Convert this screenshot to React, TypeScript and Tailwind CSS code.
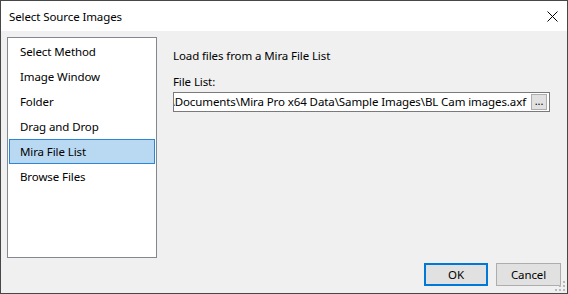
import React from 'react';

const items = ['Select Method', 'Image Window', 'Folder', 'Drag and Drop', 'Mira File List', 'Browse Files'];

function SizeGrip() {
  const dots = [
    [8, 0],
    [4, 4],
    [8, 4],
    [0, 8],
    [4, 8],
    [8, 8],
  ];
  return (
    <svg width="11" height="11" viewBox="0 0 11 11" className="absolute right-[1px] bottom-[1px]">
      {dots.map(([x, y]) => (
        <rect key={`${x}-${y}`} x={x} y={y} width="2" height="2" fill="#b8b8b8" />
      ))}
    </svg>
  );
}

export default function App() {
  return (
    <div
      className="relative w-[568px] h-[294px] border border-[#474747] bg-[#f0f0f0] text-[11.5px] tracking-[-0.1px] text-black flex flex-col"
      style={{ fontFamily: '"Noto Sans", "Open Sans", sans-serif' }}
    >
      <div className="h-[30px] bg-white flex items-center justify-between pl-[8px] pr-[9px] pt-[1px]">
        <span className="leading-[16px]">Select Source Images</span>
        <svg width="11" height="11" viewBox="0 0 11 11">
          <path d="M0.5 0.5 L10.5 10.5 M10.5 0.5 L0.5 10.5" stroke="#000" strokeWidth="1" />
        </svg>
      </div>

      <div className="flex-1 flex flex-col pt-[6px] pl-[6px] pr-[6px]">
        <div className="flex">
          <div className="w-[150px] h-[221px] border border-[#828790] bg-white pt-[1px] px-[1px]">
            {items.map((item) =>
              item === 'Mira File List' ? (
                <div
                  key={item}
                  className="h-[25px] flex items-center pl-[10px] pt-[1px] bg-[#b9d9f3] border border-[#2c86d8]"
                >
                  {item}
                </div>
              ) : (
                <div key={item} className="h-[25px] flex items-center pl-[11px] pt-[1px]">
                  {item}
                </div>
              )
            )}
          </div>

          <div className="ml-[16px] pt-[11px] flex flex-col">
            <span className="leading-[16px]">Load files from a Mira File List</span>
            <span className="leading-[16px] mt-[10px]">File List:</span>
            <div className="mt-[2px] w-[377px] h-[20px] border border-[#7a7a7a] bg-white flex items-center pr-[2px]">
              <div className="flex-1 overflow-hidden flex justify-end whitespace-nowrap pr-[5px] leading-[16px]">
                <span>C:\Users\Public\Documents\Mira Pro x64 Data\Sample Images\BL Cam images.axf</span>
              </div>
              <div className="w-[16px] h-[16px] bg-[#e1e1e1] border border-[#adadad] flex items-center justify-center text-[11px] leading-none pb-[3px]">
                ...
              </div>
            </div>
          </div>
        </div>

        <div className="mt-[5px] flex justify-end gap-[8px]">
          <div className="w-[64px] h-[23px] bg-[#e1e1e1] border-2 border-[#0078d7] flex items-center justify-center">
            OK
          </div>
          <div className="w-[65px] h-[23px] bg-[#e1e1e1] border border-[#adadad] flex items-center justify-center">
            Cancel
          </div>
        </div>
      </div>

      <SizeGrip />
    </div>
  );
}
